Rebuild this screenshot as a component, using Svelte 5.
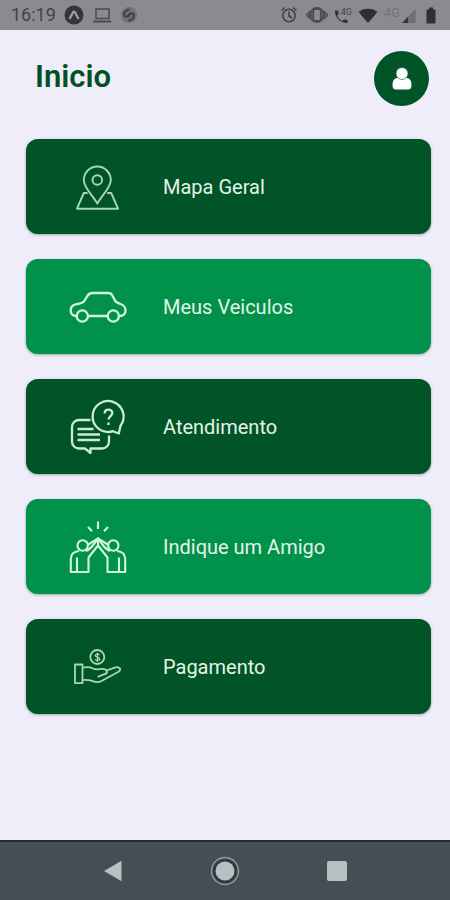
<script>
  const items = [
    { id: 'map', label: 'Mapa Geral' },
    { id: 'car', label: 'Meus Veiculos' },
    { id: 'support', label: 'Atendimento' },
    { id: 'friend', label: 'Indique um Amigo' },
    { id: 'payment', label: 'Pagamento' }
  ];
</script>

<div class="screen">
  <div class="status">
    <div class="group left">
      <span class="clock">16:19</span>
      <svg width="20" height="20" viewBox="0 0 20 20"><circle cx="10" cy="10" r="9.500" fill="#353537" /><path d="M5.500 14 9.300 6.800h1.400L14.500 14" fill="none" stroke="#a09fa2" stroke-width="2.200" /></svg>
      <svg width="20" height="20" viewBox="0 0 20 20" fill="none" stroke="#4b4b4d"><path d="M4 4h13v9.500H4z" stroke-width="1.600" /><path d="M1 16.500h18" stroke-width="2" /></svg>
      <svg width="18" height="20" viewBox="0 0 18 20"><circle cx="9" cy="10" r="8" fill="#727174" /><path d="M9.500 4.500C5 5 3 8.500 4.500 11c1.500 1.500 4.500.5 5-3M8.500 15.500c4.500-.5 6.500-4 5-6.500-1.500-1.500-4.500-.5-5 3" fill="none" stroke="#3f3f41" stroke-width="1.900" /></svg>
    </div>
    <div class="group right">
      <svg class="alarm" width="18" height="20" viewBox="0 0 18 20" fill="none" stroke="#424244" stroke-width="1.600"><circle cx="9" cy="10.500" r="6.200" /><path d="M9 6.500v4.500l3 2M1.500 5.500l3.500-3M16.500 5.500 13 2.500" /></svg>
      <svg width="22" height="20" viewBox="0 0 22 20" fill="none" stroke="#4a4a4c"><circle cx="11" cy="10" r="7.200" fill="#5d5d60" stroke-width="1.500" /><rect x="7.500" y="4.500" width="7" height="11" rx="1" fill="#8b8a8e" stroke-width="1.200" /><path d="M3 6v8M1 8v4M19 6v8M21 8v4" stroke-width="1.500" /></svg>
      <span class="call">
        <svg width="15" height="20" viewBox="0 0 15 20"><path d="M1 5.500h3l.8 3.600-1.800 1.400c1.200 2.600 3 4.400 5.500 5.500l1.500-1.800 3.500.8v3C7 18.500.5 12.500 1 5.500z" fill="#323234" /></svg>
        <span class="tiny">4G</span>
      </span>
      <svg width="20" height="20" viewBox="0 0 20 20"><path d="M.5 7C5.500 2.500 14.500 2.500 19.500 7L10 18z" fill="#2f2f31" /></svg>
      <span class="mobile">4G</span>
      <svg width="15" height="20" viewBox="0 0 15 20"><path d="M1 18 14.500 4v14z" fill="#6f6e71" /><path d="M1 18l6-6.300V18z" fill="#353537" /></svg>
      <svg class="battery" width="10" height="20" viewBox="0 0 10 20"><path d="M3 2.500h4v2h2.500v14h-9v-14H3z" fill="#303032" /></svg>
    </div>
  </div>

  <main>
    <header>
      <h1>Inicio</h1>
      <button class="avatar" aria-label="Perfil">
        <svg width="24" height="28" viewBox="0 0 24 28" fill="#fff"><path d="M7.500 13C4 13 2.500 16 2.500 20c0 3 1 4.500 3.500 4.500h12c2.500 0 3.500-1.500 3.500-4.500 0-4-1.500-7-5-7z" /><circle cx="12" cy="8.500" r="6" stroke="#005427" stroke-width=".6" /></svg>
      </button>
    </header>

    <nav class="menu">
      {#each items as item (item.id)}
        <button class="card">
          <svg class="icon" width="64" height="64" viewBox="0 0 64 64" aria-hidden="true">
            {#if item.id === 'map'}
              <g stroke="#a9d8ae" stroke-width="1.900">
                <path d="M31.300 48.500C27 40.500 17.800 33 17.800 25a13.500 13.500 0 0 1 27 0C44.800 33 35.600 40.500 31.300 48.500z" />
                <circle cx="31.300" cy="25" r="4.800" />
                <path d="M21.500 38h-3.700L11 53.700h41L45.200 38h-4" />
              </g>
            {:else if item.id === 'car'}
              <g stroke="#d3f5dc" stroke-width="2.300">
                <path d="M10.500 41C6.500 41 4.700 39 4.700 35.500c0-4 1.500-5.500 5-6.200 5-1 7.300-1 8.300-3l3.500-5.500c1.500-2.300 2.500-2.800 5-2.800H42c2.500 0 3.500.5 4.500 2.800l2.500 4.700c1 2 2.500 2.500 5.500 3.500 4 1.500 5 3 5 6.500 0 3.500-2 5.500-6 5.500M22 41h19.500" />
                <circle cx="16.300" cy="41" r="5.600" />
                <circle cx="47.300" cy="41" r="5.600" />
              </g>
            {:else if item.id === 'support'}
              <g stroke="#cdebcf" stroke-width="2.300">
                <path d="M24.500 25H13a7 7 0 0 0-7 7v14.500a7 7 0 0 0 7 7h6l5.500 4.500v-4.500H36a7 7 0 0 0 7-7V40.500" />
                <path d="M11.500 34h16M11.500 39.500h22.500M11.500 45h22.500" />
                <path d="M47 36.200A15.500 15.500 0 1 1 54.500 30.800L52.800 38.500z" />
                <path d="M38.700 18.500c0-5 7.600-5 7.600-.4 0 3-3.800 3-3.800 6.500M42.500 27.500v2.500" />
              </g>
            {:else if item.id === 'friend'}
              <g stroke="#d3f5dc" stroke-width="2.100">
                <path d="M32 6.500v7.500M22 12l4 4.300M42 12l-4 4.300" />
                <circle cx="16.700" cy="30.500" r="5.200" />
                <circle cx="47.300" cy="30.500" r="5.200" />
                <path d="M21.500 30 32 23.300 42.500 30" />
                <path d="M13 36c-5 .5-8.200 3.500-8.200 8v13h17.700V42.500L32 30.500l9.500 12v14.500h17.700v-13c0-4.500-3.200-7.500-8.200-8M20 36c4-1 6.500-5 12-12.500 5.500 7.500 8 11.500 12 12.500M11 42.500v14.500M53 42.500v14.500M32 24v7" />
              </g>
            {:else}
              <g stroke="#a9d8ae" stroke-width="1.800">
                <circle cx="31.300" cy="22" r="7" />
                <path d="M33.600 20c-.8-1.400-4.400-1.300-4.400.6 0 2 4.500 1.200 4.500 3.300 0 1.900-3.900 2-4.700.4M31.400 17.500v9.400" stroke-width="1.300" />
                <path d="M9 29.500h7.500v18.700H9z" />
                <path d="M16.500 32.700c5-1.200 7-1.200 10 .5 4 2 6 1 9 .7 3-.2 5 .6 5.500 2.600.2 2-1.500 2.700-4 3.200L31.500 42M40.500 35.500l9-3.200c4-1 6.500 2.400 3 4.400L35.500 46c-3 1.600-5 1.500-8 .4-3.500-1.300-6-1.600-11-1.400" />
              </g>
            {/if}
          </svg>
          <span>{item.label}</span>
        </button>
      {/each}
    </nav>
  </main>

  <div class="navbar">
    <button aria-label="Voltar"><svg width="32" height="32" viewBox="0 0 32 32"><path d="M7 16 24.500 5.800v20.400z" fill="#b8c0c3" /></svg></button>
    <button aria-label="Tela inicial"><svg width="32" height="32" viewBox="0 0 32 32"><circle cx="16" cy="16" r="13.400" fill="#323a42" stroke="#8f979c" stroke-width="1.600" /><circle cx="16" cy="16" r="9.500" fill="#b8c0c3" /></svg></button>
    <button aria-label="Recentes"><svg width="32" height="32" viewBox="0 0 32 32"><rect x="6" y="6" width="20" height="20" rx="2" fill="#b8c0c3" /></svg></button>
  </div>
</div>

<style>
  :global(body) { margin: 0; background: #efedf9; }
  .screen {
    display: flex;
    flex-direction: column;
    min-height: 100vh;
    background: #efedf9;
    font-family: Roboto, "Noto Sans", sans-serif;
  }
  button { border: 0; padding: 0; font: inherit; cursor: pointer; }
  svg { display: block; flex: none; }
  .status {
    display: flex;
    justify-content: space-between;
    align-items: center;
    box-sizing: border-box;
    height: 30px;
    padding: 0 14px 0 11px;
    background: #8b8a8e;
    color: #434345;
  }
  .group { display: flex; align-items: center; }
  .left { gap: 8px; }
  .right { gap: 6px; }
  .clock { font-size: 18px; line-height: 30px; }
  .alarm { margin-right: 2px; }
  .call { display: flex; }
  .tiny { font-size: 9px; line-height: 14px; margin-left: -8px; }
  .mobile { font-size: 13px; line-height: 16px; color: #737275; height: 20px; margin-right: -5px; }
  .battery { margin-left: 4px; }
  main { flex: 1; padding: 21px 19px 24px 26px; }
  header {
    display: flex;
    justify-content: space-between;
    align-items: center;
    padding: 0 2px 0 9px;
    margin-bottom: 33px;
  }
  h1 { margin: 0; padding-bottom: 4px; font-size: 31px; line-height: 36px; font-weight: 600; color: #005023; }
  .avatar {
    display: flex;
    align-items: center;
    justify-content: center;
    width: 55px;
    height: 55px;
    border-radius: 50%;
    background: #005427;
  }
  .menu { display: flex; flex-direction: column; gap: 25px; }
  .card {
    display: flex;
    align-items: center;
    gap: 33px;
    width: 100%;
    height: 95px;
    padding: 0 40px;
    border-radius: 12px;
    background: #005427;
    box-shadow: 0 1px 3px rgba(0, 40, 20, 0.35);
    color: #e6f3e8;
    font-size: 20px;
    line-height: 24px;
    text-align: left;
  }
  .card:nth-child(even) { background: #00924a; }
  .icon g { fill: none; stroke-linejoin: round; }
  .navbar {
    display: flex;
    justify-content: center;
    align-items: center;
    gap: 80px;
    box-sizing: border-box;
    height: 60px;
    border-top: 2px solid #17323a;
    background: #464e55;
  }
  .navbar button { background: none; }
</style>
